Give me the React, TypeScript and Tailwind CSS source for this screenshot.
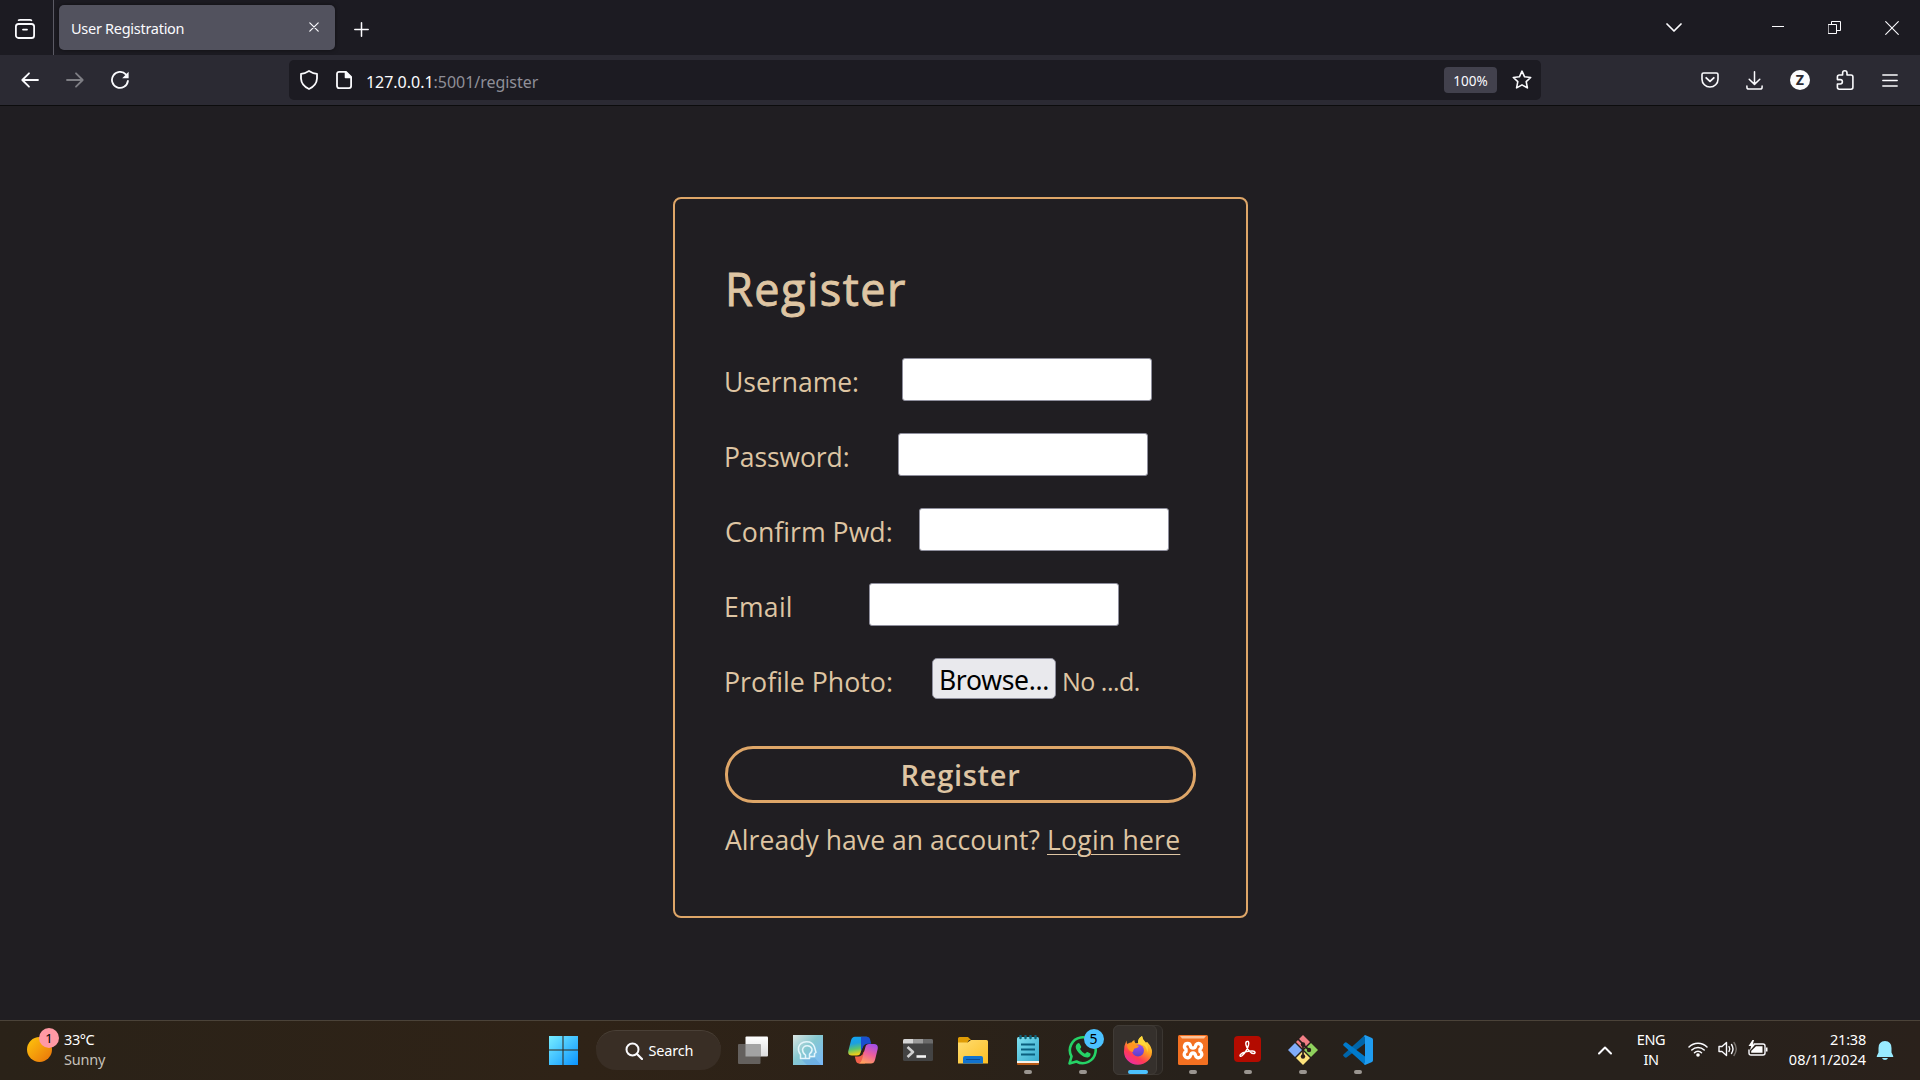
import React from "react";

const ui = "font-['Noto_Sans',sans-serif]";
const form = "font-['Open_Sans',sans-serif]";

type Kids = { children?: React.ReactNode };
const Svg = ({ w, h, vb, children, className = "" }: Kids & { w: number; h: number; vb?: string; className?: string }) => (
  <svg width={w} height={h} viewBox={vb ?? `0 0 ${w} ${h}`} fill="none" stroke="#fbfbfe" strokeWidth="1.6" strokeLinecap="round" strokeLinejoin="round" className={`block shrink-0 ${className}`}>
    {children}
  </svg>
);

const Tool = ({ children }: Kids) => <button className="flex h-full w-[45px] shrink-0 items-center justify-center">{children}</button>;

const TabBar = () => (
  <div className="flex h-[55px] items-stretch bg-[#1c1b22]">
    <div className="flex w-[53px] items-center pl-[15px]">
      <Svg w={20} h={20} vb="0 0 20 20" className="mt-[2px]">
        <path d="M3.5 1.2Q4 .9 5 .9h10q1 0 1.5.4" />
        <rect x="0.9" y="5" width="18.2" height="14" rx="2.6" strokeWidth="1.8" />
        <path d="M8 10.6h4" strokeWidth="1.8" />
      </Svg>
    </div>
    <div className="w-px bg-[#5b5a64]" />
    <div className="ml-[5px] mt-[5px] flex h-[45px] w-[276px] items-center justify-between rounded-[5px] bg-[#52525e] pl-3 pr-4 shadow-[0_0_4px_rgba(0,0,0,0.5)]">
      <span className={`${ui} whitespace-nowrap text-[14.5px] leading-5 tracking-[-0.28px] text-[#fbfbfe]`}>User Registration</span>
      <Svg w={10} h={10} className="-mt-px"><path d="M.8.8l8.4 8.4M9.2.8L.8 9.2" strokeWidth="1.2" /></Svg>
    </div>
    <div className="ml-[19px] flex items-center"><Svg w={15} h={15} className="mt-[3px]"><path d="M7.5.8v13.4M.8 7.5h13.4" strokeWidth="1.5" /></Svg></div>
    <div className="ml-auto flex items-center">
      <Svg w={16} h={10} className="mr-[90px]"><path d="M1 1l7 7 7-7" strokeWidth="1.7" /></Svg>
      <Svg w={12} h={2} className="mr-[44px] mt-[-3px]"><path d="M0 1.5h12" strokeWidth="1" strokeLinecap="butt" /></Svg>
      <Svg w={13} h={13} className="mr-[44px]"><path d="M.5 3.5h8v9h-8zM3.5 3.5v-3h9v9h-4" strokeWidth="1" strokeLinejoin="miter" /></Svg>
      <Svg w={14} h={14} className="mr-[21px]"><path d="M.7.7l12.6 12.6M13.3.7L.7 13.3" strokeWidth="1.1" /></Svg>
    </div>
  </div>
);

const ToolBar = () => (
  <div className="flex h-[51px] items-center border-b border-[#0c0c0d] bg-[#2b2a33] px-[7.5px]">
    <Tool><Svg w={18} h={16}><path d="M1.5 8H17M8 1.3L1.3 8 8 14.7" strokeWidth="1.8" /></Svg></Tool>
    <Tool><Svg w={18} h={16} className="opacity-40"><path d="M16.500 8H1M10 1.300l6.700 6.700L10 14.700" strokeWidth="1.8" /></Svg></Tool>
    <Tool>
      <Svg w={18} h={18}>
        <path d="M14.800 3.400A8 8 0 1 0 16.900 10" strokeWidth="1.8" />
        <path d="M17.600.8v6.400h-6.400z" fill="#fbfbfe" stroke="none" />
      </Svg>
    </Tool>
    <div className="ml-[146.5px] flex h-10 w-[1252px] items-center rounded-[5px] bg-[#1c1b22] pl-[11px]">
      <Svg w={18} h={20}><path d="M9 1q4 2.600 8 2.800v4.700Q16.600 15.500 9 19 1.400 15.500 1 8.500V3.800Q5 3.600 9 1z" strokeWidth="1.8" /></Svg>
      <Svg w={16} h={18} className="ml-[18px]">
        <path d="M3 .9h7l5.100 5.100v9.100a2 2 0 0 1-2 2H3a2 2 0 0 1-2-2V2.900a2 2 0 0 1 2-2z" strokeWidth="1.8" />
        <path d="M9.500 1v5.500h5.500z" fill="#fbfbfe" />
      </Svg>
      <span className={`${ui} ml-[14px] mt-1 whitespace-nowrap text-[16px] leading-6 tracking-[-0.03px] text-[#fbfbfe]`}>127.0.0.1<span className="text-[#8f8f98]">:5001/register</span></span>
      <div className="ml-auto flex h-[26px] w-[53px] items-center justify-center rounded-[4px] bg-[#42414d]">
        <span className={`${ui} mt-[2px] text-[13.5px] leading-5 text-[#fbfbfe]`}>100%</span>
      </div>
      <Svg w={20} h={20} className="ml-[15px] mr-[9px]"><path d="M10 1.200l2.600 5.600 6.100.7-4.500 4.200 1.200 6.200L10 14.900l-5.400 3 1.200-6.200L1.300 7.500l6.100-.7z" strokeWidth="1.6" /></Svg>
    </div>
    <div className="ml-auto flex h-full">
      <Tool><Svg w={18} h={16}><path d="M2.600 1h12.800q1.600 0 1.600 1.600v4.600a8 7.800 0 0 1-16 0V2.600Q1 1 2.600 1z" /><path d="M5.200 5.800L9 9.400l3.800-3.600" strokeWidth="1.8" /></Svg></Tool>
      <Tool><Svg w={17} h={19} className="mr-px"><path d="M8.500.8v12.400M3.200 8.200l5.300 5.200 5.300-5.200M.9 15v1.200q0 1.900 1.900 1.900h11.400q1.900 0 1.900-1.900V15" strokeWidth="1.5" /></Svg></Tool>
      <Tool><div className="flex size-5 items-center justify-center rounded-full bg-[#fbfbfe] font-['Inter',sans-serif] text-[13px] font-extrabold leading-none text-[#2b2a33]">Z</div></Tool>
      <Tool><Svg w={18} h={20}><path d="M1.400 8V6.900q0-1.900 1.900-1.900H6.600V3a2.200 2.200 0 0 1 4.400 0v2h4q1.900 0 1.900 1.900v10.400q0 1.900-1.900 1.900H3.300q-1.900 0-1.900-1.900V14h2.800a2.200 2.200 0 0 0 0-4.400H1.400z" /></Svg></Tool>
      <Tool><Svg w={16} h={13}><path d="M.8 1h14.400M.8 6.500h14.400M.8 12h14.400" strokeWidth="1.4" /></Svg></Tool>
    </div>
  </div>
);

const label = `${form} inline-block origin-left whitespace-nowrap text-[26.5px] leading-[36px] text-[#dec5a3]`;

const Field = ({ text, labelCls = "", cls }: { text: string; labelCls?: string; cls: string }) => (
  <div className="flex h-[75px]">
    <div className="w-0 pt-[6px]"><span className={`${label} ${labelCls}`}>{text}</span></div>
    <div className={`h-[43px] w-[250px] rounded-[3px] border border-[#8f8f9d] bg-white ${cls}`} />
  </div>
);

const Page = () => (
  <main className="flex flex-1 justify-center bg-[#201e22] pl-px pt-[91px]">
    <div className="flex h-[721px] w-[575px] flex-col rounded-[8px] border-2 border-[#dea668] pl-[50px]">
      <div className="h-[159px] pt-[57px]">
        <h1 className={`${form} whitespace-nowrap text-[45px] font-medium leading-[66px] tracking-[1.5px] text-[#dec5a3] [-webkit-text-stroke:0.9px_#dec5a3]`}>Register</h1>
      </div>
      <Field text="Username:" labelCls="-ml-px" cls="ml-[177px]" />
      <Field text="Password:" labelCls="-ml-px tracking-[-0.1px]" cls="ml-[173px]" />
      <Field text="Confirm Pwd:" labelCls="scale-x-[1.008]" cls="ml-[194px]" />
      <Field text="Email" labelCls="-ml-px tracking-[0.3px]" cls="ml-[144px]" />
      <div className="flex h-[88px]">
        <div className="w-0 pt-[6px]"><span className={`${label} -ml-px scale-x-[1.01]`}>Profile Photo:</span></div>
        <div className="ml-[207px] flex h-[41px] w-[124px] items-center justify-center rounded-[5px] border border-[#8f8f9d] bg-[#e9e9ed]">
          <span className={`${ui} mt-[2px] whitespace-nowrap text-[26.5px] leading-[36px] tracking-[-0.3px] text-black`}>Browse...</span>
        </div>
        <div className="ml-[6px] pt-[5px]"><span className={`${form} whitespace-nowrap text-[25px] leading-[36px] tracking-[-0.5px] text-[#dec5a3]`}>No ...d.</span></div>
      </div>
      <button className="flex h-[57px] w-[471px] shrink-0 items-center justify-center rounded-[28px] border-[3px] border-[#dea668]">
        <span className={`${form} whitespace-nowrap text-[29px] font-semibold leading-[36px] tracking-[0.7px] text-[#dec5a3]`}>Register</span>
      </button>
      <div className="mt-[19px] flex">
        <div className="w-[322px]"><span className={`${label} tracking-[0.06px]`}>Already have an account?</span></div>
        <a className={`${label} tracking-[0.25px] underline decoration-1 underline-offset-[4px]`}>Login here</a>
      </div>
    </div>
  </main>
);

const Task = ({ children, dot, active }: Kids & { dot?: boolean; active?: boolean }) => (
  <div className="flex h-full w-[55px] shrink-0 flex-col items-center">
    <div className={active ? "mt-1 flex h-[50px] w-[50px] rounded-[6px] border border-[#3b3631] bg-[#2c2723]" : "mt-1 flex h-[50px] w-[50px]"}>
      <div className={active ? "-ml-px -mt-px flex h-[50px] w-[44px] flex-col items-center rounded-[6px] border border-[#403b36] bg-[#35302c] pl-[6px]" : "flex h-[50px] w-[50px] flex-col items-center"}>
        <div className={active ? "relative mt-[8px] flex h-[32px] items-center justify-center" : "relative mt-[9px] flex h-[32px] items-center justify-center"}>{children}</div>
        {active && <div className="mt-[4px] h-1 w-5 shrink-0 rounded-full bg-[#4cc2ff]" />}
        {dot && <div className="mt-[4px] h-1 w-2 rounded-full bg-[#9a9590]" />}
      </div>
    </div>
  </div>
);

const TaskBar = () => (
  <footer className={`${ui} flex h-[60px] items-stretch border-t border-[#4b4339] bg-[linear-gradient(to_right,#2a2218_0%,#2f2317_30%,#2c2218_48%,#27211b_62%,#27211c_85%,#2a211b_100%)]`}>
    <div className="flex w-[535px]">
      <div className="relative ml-[27px] mt-[16px] h-[26px] w-[26px]">
        <div className="size-[25px] rounded-full bg-linear-to-br from-[#fdc70c] to-[#e8700a]" />
        <div className="absolute left-3 top-[-9px] flex size-5 items-center justify-center rounded-full bg-[#ff99a4] text-[13px] leading-none text-black">1</div>
      </div>
      <div className="ml-[11px] mt-[8px] flex flex-col text-[14.5px] leading-5">
        <span className="tracking-[-0.4px] text-white">33°C</span>
        <span className="tracking-[-0.2px] text-[#c5c0ba]">Sunny</span>
      </div>
    </div>
    <Task><Svg w={30} h={30}><defs><linearGradient id="w" x1="0" y1="0" x2="1" y2="1"><stop stopColor="#78eeff" /><stop offset="1" stopColor="#0a93ff" /></linearGradient></defs><path d="M1 1h13.500v13.500H1zM15.500 1H30v13.500H15.500zM1 15.500h13.500V30H1zM15.500 15.500H30V30H15.500z" fill="url(#w)" stroke="none" /></Svg></Task>
    <div className="flex w-[135px] shrink-0 justify-center pl-px">
      <div className="mt-[9px] flex h-10 w-[125px] items-center rounded-full border-t border-[#4a4037] bg-[#392e25] pl-[29px]">
        <Svg w={18} h={18}><circle cx="7.5" cy="7.5" r="6" strokeWidth="2" /><path d="M12 12l5 5" strokeWidth="2.2" /></Svg>
        <span className="-mt-px ml-[6px] text-[14.5px] leading-5 tracking-[-0.2px] text-white">Search</span>
      </div>
    </div>
    <Task><Svg w={30} h={28}><defs><linearGradient id="tv" x1="0" y1="0" x2="0" y2="1"><stop stopColor="#fff" /><stop offset="1" stopColor="#dcdcdc" /></linearGradient></defs><rect x="7.5" y=".5" width="22.5" height="20" rx="1" fill="url(#tv)" stroke="none" /><rect x="0" y="8" width="22.5" height="20" rx="1" fill="#64605d" stroke="none" /><rect x="7.5" y="8" width="15" height="12.5" fill="#a3a3a3" stroke="none" /></Svg></Task>
    <Task>
      <Svg w={30} h={30}>
        <defs><linearGradient id="hd" x1="0" y1="0" x2="1" y2="1"><stop stopColor="#dbe5e2" /><stop offset=".45" stopColor="#86c8d0" /><stop offset="1" stopColor="#78b8fa" /></linearGradient></defs>
        <rect width="30" height="30" fill="url(#hd)" stroke="none" />
        <path d="M8 24l6 6h14l-6-7z" fill="#5fa4dc" opacity=".5" stroke="none" />
        <path d="M7.500 23.500V19.500Q5 16.500 5.500 12.500A8.300 7.500 0 0 1 21.500 12l1.500 5.500-1.500 1v3h-4M12.500 23.500v-3.500Q9.500 18 9.500 14.500a5 5 0 0 1 9.500-.5q.3 3-2.500 5v4.500zM7.500 23.500h5" stroke="#e4f5fb" strokeWidth="1.5" />
      </Svg>
    </Task>
    <Task>
      <Svg w={30} h={28}>
        <defs><linearGradient id="ca" x1="0" y1="0" x2=".2" y2="1"><stop stopColor="#12a6f5" /><stop offset=".4" stopColor="#1c9fe0" /><stop offset=".7" stopColor="#5cc46c" /><stop offset="1" stopColor="#f3cf17" /></linearGradient><linearGradient id="cb" x1=".7" y1="0" x2=".3" y2="1"><stop stopColor="#a34fe8" /><stop offset=".5" stopColor="#ee5f9b" /><stop offset="1" stopColor="#ffa25c" /></linearGradient></defs>
        <path d="M7 .8h12q-2 .5-3 4L12.500 17q-.8 2.500-3.500 2.500H4Q-.5 19.500.3 15L3 4.500Q4 .8 7 .8z" fill="url(#ca)" stroke="none" />
        <path d="M13 .8h6q2.500 0 3.200 3l1 4h-3.700q-3 0-4 3L13 15z" fill="#1a4fcf" stroke="none" />
        <path d="M17 27.500h-6q-2.500 0-3.200-3l-1-4h3.700q3 0 4-3l2-3z" fill="#f0604a" stroke="none" />
        <path d="M15.800 9.500h1.700L14.200 19h-1.700z" fill="#2c2218" stroke="none" />
        <path d="M23 27.500H11q2-.5 3-4l3.500-12.700Q18.300 8 21 8h5q4.500 0 3.700 5L27 24q-1 3.500-4 3.500z" fill="url(#cb)" stroke="none" />
      </Svg>
    </Task>
    <Task><Svg w={30} h={22}><rect width="30" height="22" rx="1.5" fill="#434343" stroke="none" /><path d="M0 4.500V1.500Q0 0 1.500 0H10v4.500z" fill="#d6d6d6" stroke="none" /><path d="M10 0h10v4.500H10z" fill="#9b9b9b" stroke="none" /><path d="M20 0h8.500Q30 0 30 1.500v3H20z" fill="#6b6b6b" stroke="none" /><path d="M4.500 8l5.500 5-5.500 5" stroke="#cfcfcf" strokeWidth="2.6" strokeLinecap="butt" /><path d="M13.500 17.500H23" stroke="#f4f4f4" strokeWidth="2.6" strokeLinecap="butt" /></Svg></Task>
    <Task><Svg w={30} h={28}><defs><linearGradient id="fo" x1="0" y1="0" x2="1" y2="1"><stop stopColor="#ffdc70" /><stop offset="1" stopColor="#fcbf24" /></linearGradient></defs><path d="M0 2.500Q0 1 1.500 1H10l3 3h-2L8 9H0z" fill="#e09c05" stroke="none" /><path d="M0 6.500h9.500L13 4h15.500Q30 4 30 5.500V27.500H0z" fill="url(#fo)" stroke="none" /><path d="M5 27.500V22q0-2 2-2h16q2 0 2 2v5.500z" fill="#1173cf" stroke="none" /><path d="M8.500 23.500h13" stroke="#0a4b94" strokeWidth="1.2" /></Svg></Task>
    <Task dot><Svg w={22} h={30}><defs><linearGradient id="np" x1="0" y1="0" x2="1" y2="1"><stop stopColor="#7ee0f0" /><stop offset="1" stopColor="#35a9cc" /></linearGradient></defs><rect y="2" width="22" height="26" rx="1.5" fill="url(#np)" stroke="none" /><path d="M0 26h22v2H0z" fill="#f6f1ea" stroke="none" /><path d="M0 28h22v1q0 1-1 1H1q-1 0-1-1z" fill="#b85a16" stroke="none" /><path d="M4 9.500h14M4 14.500h14M4 19.500h14" stroke="#0b5f7e" strokeWidth="1.8" strokeLinecap="butt" /><path d="M3.500 1v2M8.500 1v2M13.500 1v2M18.500 1v2" stroke="#0f6379" strokeWidth="2.4" /></Svg></Task>
    <Task dot>
      <Svg w={30} h={30}><path d="M1.500 28.500l2-7A12.900 12.900 0 1 1 8.500 26.500z" stroke="#25d366" strokeWidth="2.6" /><path d="M9.500 8.500q1.200-1 2.200.2l1.500 3q.2.800-1.200 2.300 2 3.500 5 4.800 1.800-2.200 2.500-1.800l3 1.600q.6 3-2.500 3.800-3.500.5-8-3.500-4.500-4.300-4.300-7.500.3-2 1.800-2.900z" fill="#25d366" stroke="none" /></Svg>
      <div className="absolute right-[-6px] top-[-5px] flex size-5 items-center justify-center rounded-full bg-[#4cc2ff] text-[14px] leading-none text-black">5</div>
    </Task>
    <Task active>
      <Svg w={28} h={29}>
        <defs><linearGradient id="ff" x1=".8" y1="0" x2=".2" y2="1"><stop stopColor="#fff04a" /><stop offset=".4" stopColor="#ffa01f" /><stop offset=".7" stopColor="#ff3b55" /><stop offset="1" stopColor="#e62bb0" /></linearGradient><linearGradient id="fp" x1="0" y1="0" x2="0" y2="1"><stop stopColor="#9a4ff0" /><stop offset="1" stopColor="#5840c8" /></linearGradient></defs>
        <path d="M2.500 4.500Q2.500 7 3.500 8 5 6.200 7.500 6.500 8.500 4.500 10.500 4q-.3 2 1 3.200l2.700-.2Q13.500 2.500 18 0q.3 3.500 3.800 6.500l1.400-.5Q28 11 28 16A14 13 0 0 1 0 15.500Q0 9 2.500 4.500z" fill="url(#ff)" stroke="none" />
        <circle cx="14" cy="14.500" r="6" fill="url(#fp)" stroke="none" />
        <path d="M3 9q4-2.500 8-.5l4 1.500q-1 2-4.500 2.500-1.500 1.500-1.500 3.500Q3.500 15 3 9z" fill="#ff9420" stroke="none" />
        <path d="M18 0q.3 3.500 4 7.500 3 4 1 9.500.5-5-3-7.500l-6-2Q13.500 2.500 18 0z" fill="#ffd73a" stroke="none" />
      </Svg>
    </Task>
    <Task dot>
      <Svg w={30} h={30}>
        <rect width="30" height="30" rx="1.5" fill="#f37021" stroke="none" /><path d="M2 1h26L26 3.500H4z" fill="#fbc39b" stroke="none" />
        <path d="M9.500 8.500a3 3 0 0 0-1.500 5.600v2.400a3.300 3.300 0 1 0 4.700 3.700q.3-2.200 2.300-2.200t2.300 2.200a3.300 3.300 0 1 0 4.700-3.700v-2.400a3 3 0 1 0-4.500-2.900q-.5 1.800-2.500 1.800t-2.500-1.800a3 3 0 0 0-3-2.700z" stroke="#fff" strokeWidth="3.4" />
      </Svg>
    </Task>
    <Task dot>
      <Svg w={27} h={26} className="-mt-[2px]">
        <rect width="27" height="26" rx="4" fill="#b30b00" stroke="none" />
        <path d="M13 5.500c1.800-.6 2 1.200 1.500 3.500C13.500 13 10.500 17.500 8 19.700c-1.500 1.200-2.800.2-1.500-1.200C8.500 16.500 14 15 18.500 15c3 0 3.500 2.500 1 2.500C16.500 17.500 13 13 12 9c-.5-2 0-3.200 1-3.500z" stroke="#fff" strokeWidth="1.4" />
      </Svg>
    </Task>
    <Task dot><Svg w={30} h={30}><path d="M15 0l7 7-7 7-7-7z" fill="#f27f85" stroke="none" /><path d="M7 8l7 7-7 7-7-7z" fill="#80acf8" stroke="none" /><path d="M23 8l7 7-7 7-7-7z" fill="#8fd15d" stroke="none" /><path d="M15 16l7 7-7 7-7-7z" fill="#fde37c" stroke="none" /><path d="M9.500 3.500L15 9v13M15 9.500l6 5.500" stroke="#2a1e1c" strokeWidth="1.7" /><circle cx="15" cy="9.500" r="2.200" fill="#2a1e1c" stroke="none" /><circle cx="21" cy="15" r="2.200" fill="#2a1e1c" stroke="none" /><circle cx="15" cy="21.500" r="2.200" fill="#2a1e1c" stroke="none" /></Svg></Task>
    <Task dot><Svg w={30} h={30}><path d="M22 0v8.500L3.500 22.500Q2.500 23 1.700 22.300L.5 21Q-.3 20 .7 19.200z" fill="#0065a9" stroke="none" /><path d="M22 30v-8.500L3.500 7.500Q2.500 7 1.700 7.700L.5 9Q-.3 10 .7 10.800z" fill="#007acc" stroke="none" /><path d="M22 0l7 3q1 .5 1 1.800v20.400q0 1.300-1 1.800l-7 3-1-1.200 1-1V2.200L21 1.200z" fill="#1f9cf0" stroke="none" /></Svg></Task>
    <div className="ml-auto flex pr-[26px]">
      <Svg w={14} h={9} className="mt-[25px]"><path d="M1 7.500L7 1.500l6 6" strokeWidth="2" /></Svg>
      <div className="ml-[17px] mt-[8px] flex w-[44px] flex-col items-center text-[14.5px] leading-5 tracking-[-0.4px] text-white"><span>ENG</span><span>IN</span></div>
      <Svg w={20} h={16} className="ml-[15px] mt-[20px]"><path d="M1 6a12.500 12.500 0 0 1 18 0M3.800 9a8.700 8.700 0 0 1 12.400 0M6.500 11.800a5 5 0 0 1 7 0" strokeWidth="1.5" /><circle cx="10" cy="14" r="1.8" fill="#fff" stroke="none" /></Svg>
      <Svg w={20} h={16} className="ml-[10px] mt-[20px]"><path d="M1 5.500h3L8.500 1.500v13L4 10.500H1zM11 5.500q1.500 2.500 0 5M13.500 3.500q3 4.500 0 9" strokeWidth="1.4" /><path d="M16 1.500q4.500 6.500 0 13" stroke="#77726d" strokeWidth="1.4" /></Svg>
      <Svg w={20} h={16} className="ml-[10px] mt-[19px]"><path d="M6 4h9q2 0 2 2v7q0 2-2 2H3q-2 0-2-2v-3" strokeWidth="1.4" /><path d="M8 6.200h6.500v6.500H3.200V11z" fill="#fff" stroke="none" /><path d="M18 7.500h1.500v4H18z" fill="#fff" stroke="none" /><path d="M4.500 0L.5 6h2.600L2 10.500 7.500 4.200H4.800L6 0z" fill="#fff" stroke="none" /></Svg>
      <div className="ml-[19px] mt-[8px] flex w-[79px] flex-col items-end text-[14.5px] leading-5 text-white"><span className="tracking-[-0.2px]">21:38</span><span>08/11/2024</span></div>
      <Svg w={18} h={19} className="ml-[10px] mt-[20px]"><path d="M9 0Q2.500.3 2.500 7v4.500L.8 15v1h16.400v-1l-1.700-3.500V7Q15.500.3 9 0zM6 17h6q-.8 2-3 2t-3-2z" fill="#99ebff" stroke="none" /></Svg>
    </div>
  </footer>
);

export default function App() {
  return (
    <div className="flex h-[1080px] w-[1920px] flex-col overflow-hidden">
      <TabBar />
      <ToolBar />
      <Page />
      <TaskBar />
    </div>
  );
}
